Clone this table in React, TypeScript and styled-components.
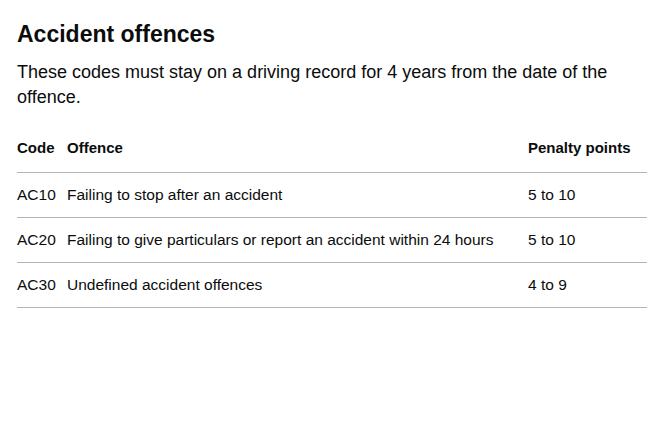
import React from "react";
import styled, { createGlobalStyle } from "styled-components";

const Global = createGlobalStyle`
  html, body { margin: 0; padding: 0; background: #fff; }
  body { font-family: "Liberation Sans", Arial, sans-serif; color: #0b0c0c; }
`;

const Page = styled.main`
  padding: 19px 13px 0 17px;
  width: 630px;
`;

const Heading = styled.h2`
  margin: 0 0 11px;
  font-size: 23px;
  line-height: 30px;
  font-weight: 700;
`;

const Lead = styled.p`
  margin: 0 0 23px;
  font-size: 18px;
  line-height: 25px;
`;

const Table = styled.table`
  border-collapse: collapse;
  width: 630px;
  table-layout: fixed;
  font-size: 15.5px;
`;

const Th = styled.th<{ $w: number }>`
  width: ${(p) => p.$w}px;
  text-align: left;
  font-weight: 700;
  font-size: 15px;
  padding: 5px 0 14px;
  line-height: 20px;
  border-bottom: 1px solid #b1b4b6;
`;

const Td = styled.td`
  padding: 10px 0;
  line-height: 24px;
  border-bottom: 1px solid #b1b4b6;
  vertical-align: top;
`;

const rows = [
  ["AC10", "Failing to stop after an accident", "5 to 10"],
  ["AC20", "Failing to give particulars or report an accident within 24 hours", "5 to 10"],
  ["AC30", "Undefined accident offences", "4 to 9"],
];

export default function App() {
  return (
    <>
      <Global />
      <Page>
        <Heading>Accident offences</Heading>
        <Lead>
          These codes must stay on a driving record for 4 years from the date of the offence.
        </Lead>
        <Table>
          <thead>
            <tr>
              <Th $w={50}>Code</Th>
              <Th $w={461}>Offence</Th>
              <Th $w={119}>Penalty points</Th>
            </tr>
          </thead>
          <tbody>
            {rows.map((r) => (
              <tr key={r[0]}>
                <Td>{r[0]}</Td>
                <Td>{r[1]}</Td>
                <Td>{r[2]}</Td>
              </tr>
            ))}
          </tbody>
        </Table>
      </Page>
    </>
  );
}
